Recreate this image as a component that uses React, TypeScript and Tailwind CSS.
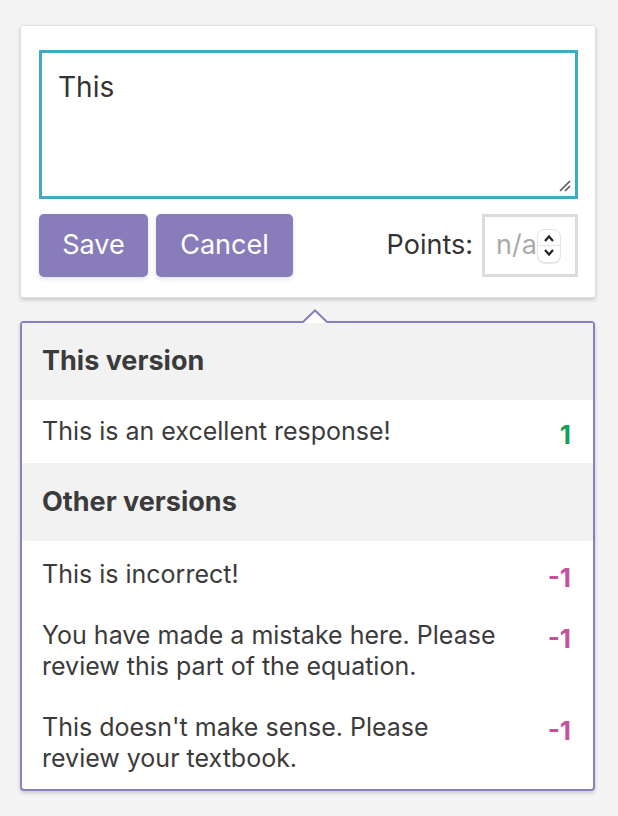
import React from "react";

const font = { fontFamily: "Inter, 'Noto Sans', sans-serif" };

function Row({ lines, points, color }: { lines: string[]; points: string; color: string }) {
  return (
    <div className="flex items-start justify-between py-[15px] pl-[20px] pr-[22px]">
      <div className="text-[25px] leading-[31px] text-[#3b3b3b]">
        {lines.map((l, i) => (
          <div key={i}>{l}</div>
        ))}
      </div>
      <div className={`pt-[6px] text-[26px] font-bold leading-[25px] ${color}`}>{points}</div>
    </div>
  );
}

export default function App() {
  return (
    <div className="min-h-[816px] bg-[#f4f4f4] pt-[25px] pl-[20px]" style={font}>
      <div className="w-[576px] rounded-[3px] border border-[#e0e0e0] bg-white pt-[24px] pb-[20px] pl-[18px] pr-[17px] shadow-[0_2px_4px_rgba(0,0,0,0.18)]">
        <div className="relative h-[149px] border-[3px] border-[#42a9c4] px-[16px] pt-[17px] text-[28px] leading-[34px] text-[#333]">
          This
          <svg className="absolute bottom-[3px] right-[3px]" width="14" height="14" viewBox="0 0 14 14">
            <line x1="2" y1="12" x2="12" y2="2" stroke="#555" strokeWidth="1.6" />
            <line x1="7" y1="12" x2="12" y2="7" stroke="#555" strokeWidth="1.6" />
          </svg>
        </div>
        <div className="mt-[15px] flex h-[63px] items-stretch">
          <button className="w-[109px] rounded-[5px] bg-[#887dba] text-[27px] text-white shadow-[0_2px_5px_rgba(0,0,0,0.12)]">
            Save
          </button>
          <button className="ml-[8px] w-[137px] rounded-[5px] bg-[#887dba] text-[27px] text-white shadow-[0_2px_5px_rgba(0,0,0,0.12)]">
            Cancel
          </button>
          <div className="ml-auto flex items-center">
            <span className="mr-[9px] text-[27px] text-[#333]">Points:</span>
            <div className="flex h-[63px] w-[96px] items-center border-[3px] border-[#dcdcdc] pl-[11px]">
              <span className="text-[27px] text-[#aaa]">n/a</span>
              <div className="flex h-[34px] w-[24px] flex-col items-center justify-center rounded-[8px] border border-[#e4e4e4] bg-white shadow-[0_1px_1px_rgba(0,0,0,0.1)]">
                <svg width="14" height="10" viewBox="0 0 14 10">
                  <polyline points="3,8 7,3.5 11,8" fill="none" stroke="#222" strokeWidth="2.2" />
                </svg>
                <div className="my-[2px] h-px w-full bg-[#e4e4e4]" />
                <svg width="14" height="10" viewBox="0 0 14 10">
                  <polyline points="3,2 7,6.5 11,2" fill="none" stroke="#222" strokeWidth="2.2" />
                </svg>
              </div>
            </div>
          </div>
        </div>
      </div>

      <div className="relative mt-[23px] w-[575px] rounded-[4px] border-2 border-[#8a80c0] bg-white shadow-[0_2px_4px_rgba(0,0,0,0.18)]">
        <svg className="absolute left-[281px] top-[-14px]" width="24" height="14" viewBox="0 0 24 14">
          <polygon points="0,14 12,1.5 24,14" fill="#fff" />
          <polyline points="0,13 12,1.5 24,13" fill="none" stroke="#8a80c0" strokeWidth="2" />
        </svg>
        <div className="flex h-[77px] items-center bg-[#f2f2f2] pl-[20px] text-[27px] font-bold text-[#3b3b3b]">
          This version
        </div>
        <div className="flex items-start justify-between py-[16px] pl-[20px] pr-[22px]">
          <div className="text-[25px] leading-[31px] text-[#3b3b3b]">This is an excellent response!</div>
          <div className="pt-[6px] text-[26px] font-bold leading-[25px] text-[#17a05d]">1</div>
        </div>
        <div className="flex h-[78px] items-center bg-[#f2f2f2] pl-[20px] text-[27px] font-bold text-[#3b3b3b]">
          Other versions
        </div>
        <div className="pt-[3px]">
          <Row lines={["This is incorrect!"]} points="-1" color="text-[#c4519c]" />
          <Row
            lines={["You have made a mistake here. Please", "review this part of the equation."]}
            points="-1"
            color="text-[#c4519c]"
          />
          <Row
            lines={["This doesn't make sense. Please", "review your textbook."]}
            points="-1"
            color="text-[#c4519c]"
          />
        </div>
      </div>
    </div>
  );
}
